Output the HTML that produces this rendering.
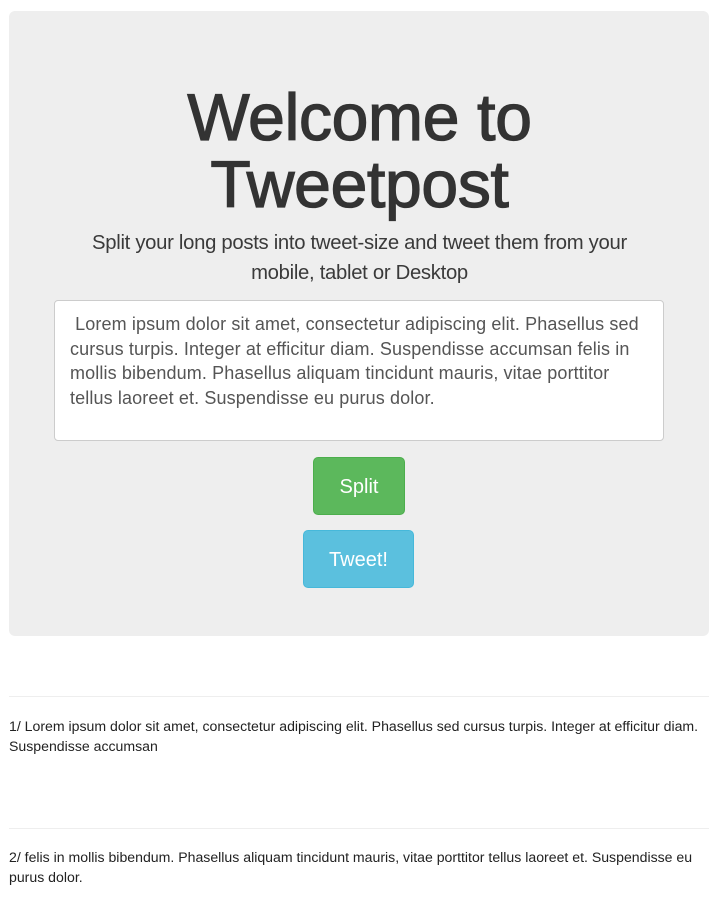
<!DOCTYPE html>
<html><head><meta charset="utf-8"><style>
*{box-sizing:border-box;margin:0;padding:0}
body{width:719px;height:909px;background:#fff;font-family:"Liberation Sans",Helvetica,Arial,sans-serif;color:#333;position:relative;overflow:hidden}
.jum{position:absolute;left:9px;top:11px;width:700px;height:625px;background:#eee;border-radius:6px}
h1{position:absolute;left:0;width:719px;top:84px;text-align:center;font-size:66px;line-height:67px;font-weight:normal;color:#333;letter-spacing:-0.3px;-webkit-text-stroke:1.3px #333}
.sub{position:absolute;left:0;width:719px;top:228px;text-align:center;font-size:20.3px;line-height:30px;font-weight:300;color:#3a3a3a;letter-spacing:-0.3px}
.ta{position:absolute;left:54px;top:300px;width:610px;height:141px;background:#fff;border:1px solid #ccc;border-radius:4px;padding:11px 15px;font-size:18px;line-height:24.5px;color:#555;white-space:nowrap;letter-spacing:0.12px}
.btn{position:absolute;color:#fff;font-size:20px;text-align:center;border-radius:5px}
.split{left:313px;top:457px;width:92px;height:58px;line-height:58px;background:#5cb85c;border:1px solid #4cae4c}
.tweet{left:303px;top:530px;width:111px;height:58px;line-height:58px;background:#5bc0de;border:1px solid #46b8da}
hr{position:absolute;left:9px;width:700px;border:0;border-top:1px solid #eee}
.p{position:absolute;left:9px;width:705px;font-size:14.1px;line-height:19.5px;color:#222;white-space:nowrap}
</style></head><body>
<div class="jum"></div>
<h1>Welcome to<br>Tweetpost</h1>
<div class="sub">Split your long posts into tweet-size and tweet them from your<br>mobile, tablet or Desktop</div>
<div class="ta">&nbsp;Lorem ipsum dolor sit amet, consectetur adipiscing elit. Phasellus sed<br>cursus turpis. Integer at efficitur diam. Suspendisse accumsan felis in<br>mollis bibendum. Phasellus aliquam tincidunt mauris, vitae porttitor<br>tellus laoreet et. Suspendisse eu purus dolor.</div>
<div class="btn split">Split</div>
<div class="btn tweet">Tweet!</div>
<hr style="top:696px">
<div class="p" style="top:717px">1/ Lorem ipsum dolor sit amet, consectetur adipiscing elit. Phasellus sed cursus turpis. Integer at efficitur diam.<br>Suspendisse accumsan</div>
<hr style="top:828px">
<div class="p" style="top:848px">2/ felis in mollis bibendum. Phasellus aliquam tincidunt mauris, vitae porttitor tellus laoreet et. Suspendisse eu<br>purus dolor.</div>
</body></html>
